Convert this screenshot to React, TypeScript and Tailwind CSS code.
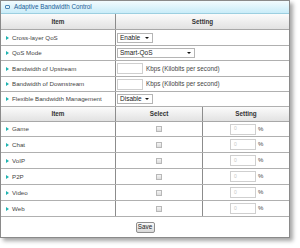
const font = { fontFamily: '"Liberation Sans", Arial, sans-serif' };

function Bullet() {
  return <span className="mr-[3px] inline-block h-0 w-0 border-y-[2px] border-l-[3px] border-y-transparent border-l-[#1fb3b0]" />;
}

function FakeSelect({ value, width }: { value: string; width: string }) {
  return (
    <div className={`flex h-[10px] items-center justify-between border border-[#b5b5b5] bg-white pl-[2px] pr-[3px] text-[6.5px] text-[#222] ${width}`}>
      <span>{value}</span>
      <span className="inline-block h-0 w-0 border-x-[2px] border-t-[2px] border-x-transparent border-t-[#111]" />
    </div>
  );
}

function TextBox({ placeholder }: { placeholder?: string }) {
  return (
    <div className="flex h-[11px] w-[26px] items-center border border-[#cfcfcf] bg-white pl-[3px] text-[5px] text-[#c8c8c8]">
      {placeholder}
    </div>
  );
}

function HeaderRow({ cols, h }: { cols: { label: string; w: string }[]; h: string }) {
  return (
    <div className={`flex border-b border-[#a8a8a8] bg-gradient-to-b from-[#fbfbfb] to-[#e2e2e2] ${h}`}>
      {cols.map((c, i) => (
        <div
          key={c.label}
          className={`flex items-center justify-center text-[6.3px] font-bold text-[#333] ${c.w} ${i < cols.length - 1 ? "border-r border-[#8c8c8c]" : ""}`}
        >
          {c.label}
        </div>
      ))}
    </div>
  );
}

function Row({ label, h, children }: { label: string; h: string; children: React.ReactNode }) {
  return (
    <div className={`flex border-b border-[#b0b0b0] ${h}`}>
      <div className="flex w-[115px] shrink-0 items-center border-r border-[#8c8c8c] pl-[5px] text-[6.2px] text-[#444]">
        <Bullet />
        {label}
      </div>
      <div className="flex flex-1 items-center pl-[1px]">{children}</div>
    </div>
  );
}

const apps = [
  { name: "Game", h: "h-[15px]" },
  { name: "Chat", h: "h-[16px]" },
  { name: "VoIP", h: "h-[16px]" },
  { name: "P2P", h: "h-[16px]" },
  { name: "Video", h: "h-[16px]" },
  { name: "Web", h: "h-[16px]" },
];

export default function App() {
  return (
    <div className="h-[248px] w-[300px] bg-white" style={font}>
      <div className="w-[290px] border border-[#8a8a8a] bg-white shadow-[3px_3px_4px_rgba(0,0,0,0.35)]">
        {/* title */}
        <div className="flex h-[13px] items-center border-b border-[#9ccfe0] bg-gradient-to-b from-[#f2fbfe] to-[#c9ecf8] pl-[4px] text-[6.3px] text-[#1c5d97]">
          <span className="mr-[4px] inline-block h-[4px] w-[5px] rounded-[1px] border border-[#4d87b7] bg-[#dff3fb]" />
          Adaptive Bandwidth Control
        </div>

        <HeaderRow
          h="h-[16px]"
          cols={[
            { label: "Item", w: "w-[115px] shrink-0" },
            { label: "Setting", w: "flex-1" },
          ]}
        />

        <Row label="Cross-layer QoS" h="h-[16px]">
          <FakeSelect value="Enable" width="w-[36px]" />
        </Row>
        <Row label="QoS Mode" h="h-[15px]">
          <FakeSelect value="Smart-QoS" width="w-[78px]" />
        </Row>
        <Row label="Bandwidth of Upstream" h="h-[16px]">
          <TextBox />
          <span className="ml-[3px] text-[6.3px] text-[#444]">Kbps (Kilobits per second)</span>
        </Row>
        <Row label="Bandwidth of Downstream" h="h-[15px]">
          <TextBox />
          <span className="ml-[3px] text-[6.3px] text-[#444]">Kbps (Kilobits per second)</span>
        </Row>
        <Row label="Flexible Bandwidth Management" h="h-[15px]">
          <FakeSelect value="Disable" width="w-[36px]" />
        </Row>

        <HeaderRow
          h="h-[15px]"
          cols={[
            { label: "Item", w: "w-[115px] shrink-0" },
            { label: "Select", w: "w-[87px] shrink-0" },
            { label: "Setting", w: "flex-1" },
          ]}
        />

        {apps.map((a) => (
          <div key={a.name} className={`flex border-b border-[#b0b0b0] ${a.h}`}>
            <div className="flex w-[115px] shrink-0 items-center border-r border-[#8c8c8c] pl-[5px] text-[6.2px] text-[#444]">
              <Bullet />
              {a.name}
            </div>
            <div className="flex w-[87px] shrink-0 items-center justify-center border-r border-[#8c8c8c]">
              <span className="inline-block h-[6px] w-[6px] border border-[#b8b8b8] bg-gradient-to-b from-[#f4f4f4] to-[#dcdcdc]" />
            </div>
            <div className="flex flex-1 items-center pl-[27px]">
              <TextBox placeholder="0" />
              <span className="ml-[2px] text-[6px] text-[#444]">%</span>
            </div>
          </div>
        ))}

        <div className="flex h-[20px] items-center justify-center">
          <div className="flex h-[11px] w-[19px] items-center justify-center rounded-[2px] border border-[#8f8f8f] bg-gradient-to-b from-[#fafafa] to-[#d8d8d8] text-[6.3px] text-[#222]">
            Save
          </div>
        </div>
      </div>
    </div>
  );
}
